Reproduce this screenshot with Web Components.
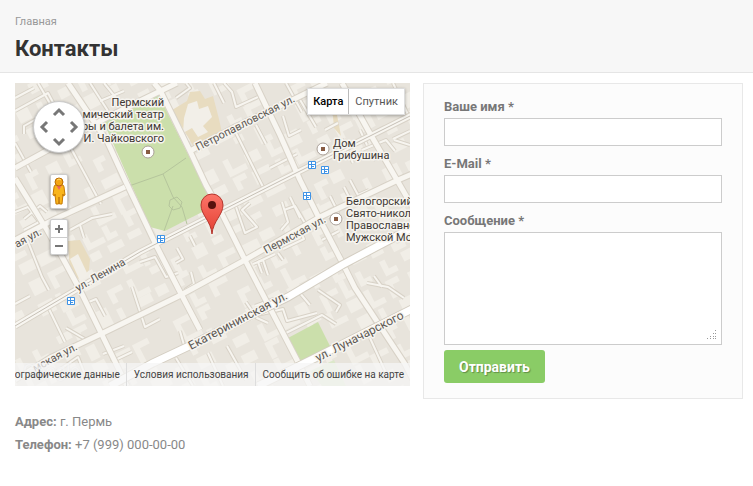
<!DOCTYPE html>
<html lang="ru">
<head>
<meta charset="utf-8">
<meta name="viewport" content="width=device-width, initial-scale=1">
<title>Контакты</title>
<style>
body { margin: 0; background: #fff; color: #888; font-family: Roboto, "Liberation Sans", sans-serif; font-size: 13px; }
</style>
</head>
<body>
<contacts-page></contacts-page>
<script>
class BaseElement extends HTMLElement {
  constructor() {
    super();
    this.attachShadow({ mode: 'open' }).innerHTML = '<style>*{box-sizing:border-box}</style>' + this.render();
  }
}

customElements.define('page-header', class extends BaseElement {
  render() {
    return `<style>
      :host { display: block; padding: 15px 15px 8px; background: #f7f7f7; border-bottom: 1px solid #e5e5e5; }
      nav { font-size: 11px; line-height: 14px; }
      a { color: #999; text-decoration: none; }
      h1 { margin: 5px 0 0; color: #333; font-size: 22px; line-height: 30px; font-weight: 700; }
    </style>
    <nav><a href="#"><slot name="crumb"></slot></a></nav>
    <h1><slot></slot></h1>`;
  }
});

// Buildings are laid on a grid turned to follow the streets.
function buildings() {
  let seed = 23;
  const rnd = () => (seed = (seed * 16807) % 2147483647) / 2147483647;
  let out = '';
  for (let u = -260; u < 260; u += 23) {
    for (let v = -240; v < 240; v += 20) {
      const r = rnd(), w = 10 + Math.floor(rnd() * 10), h = 7 + Math.floor(rnd() * 9);
      const x = u + Math.floor(rnd() * 6), y = v + Math.floor(rnd() * 5);
      if (r < 0.2) continue;
      if (r < 0.5) out += `<path d="M${x} ${y}h${w}v${h}h-${w}z"/>`;
      else if (r < 0.75) out += `<path d="M${x} ${y}h${w}v6h-${w - 6}v${h}h-6z"/>`;
      else out += `<path d="M${x} ${y}h6v${h}h${w - 4}v6h-${w + 2}z"/>`;
    }
  }
  return out;
}

customElements.define('city-map', class extends BaseElement {
  render() {
    const lanes = [
      'M15 111L48 93L56 108L24 126V134', 'M15 98L34 88', 'M38 83L55 112',
      'M90 83L108 111M104 83L117 99M100 101L124 91', 'M176 98L190 88L186 83M224 83L232 92L236 107L258 97',
      'M214 83L224 103', 'M66 139L101 204', 'M15 143L31 172', 'M15 212L28 207L44 228',
      'M25 234L42 277L49 290', 'M24 230L41 221M24 219L40 206L47 212', 'M70 230L92 218L112 214M80 225L84 238',
      'M140 262L155 257L166 277L178 273', 'M177 248L183 259L176 263M190 236L195 246',
      'M185 290L194 284L191 272', 'M236 207L245 233L257 227L242 210L250 203', 'M253 264L263 260L268 275',
      'M262 273L258 262L275 254', 'M284 210L295 206L306 225M284 236L299 229L304 239L283 249',
      'M283 260L278 253M322 240L339 231', 'M290 197L300 218M282 202L288 222L281 230',
      'M350 180L358 195L369 190M330 196L338 212L328 217', 'M344 187L351 201',
      'M15 304L30 296M49 309L65 342M84 304L96 299L105 316M66 328L90 342',
      'M132 287L145 327L160 319M180 331L184 345', 'M56 372L78 357L84 372', 'M103 354L124 346M111 362L132 352',
      'M217 333L244 318L283 309L287 321L317 313', 'M282 335L322 315L336 324',
      'M246 302L257 318L268 323M255 306L274 299', 'M299 292L310 305M318 290L340 305L336 312',
      'M208 353L223 386M227 346L246 380M176 358L193 386', 'M367 283L388 287L404 298',
      'M374 276L382 287M370 338L386 373', 'M362 150L386 140L395 151M373 160L388 153M393 139L410 131',
      'M342 139L353 163M360 130L367 145M283 116L289 136L301 130', 'M299 98L316 127M286 83L302 112',
      'M325 130L338 123', 'M398 181L405 175M394 140L410 145', 'M235 131L263 187M256 125L266 144',
      'M393 83L410 119', 'M270 168L297 154'
    ].map(d => `<path d="${d}"/>`).join('');
    const roads = [
      'M15 178L47 230L60 253L80 290L127 386', 'M15 168L70 138L104 119L140 101L177 83',
      'M68 83L107 141L125 180L157 247L178 288L200 330', 'M154 83L160 90L190 151L206 185L220 210L245 260L298 362L310 386',
      'M15 240L53 220L125 187', 'M190 151L233 128L280 106L327 83', 'M255 83L280 135L300 180L318 216L342 262L355 288L405 364L416 386',
      'M342 83L368 130L397 180L412 206',
      'M15 380L50 358L103 333L177 297L245 260L320 217L398 180L412 174', 'M15 326L140 252L280 181L412 115'
    ].map(d => `<path d="${d}"/>`).join('');
    const avenues = '<path d="M110 386L153 363L187 347L288 297L342 265L412 228"/><path d="M258 386L315 358L412 309"/>';
    const poi = (x, y) => `<circle cx="${x}" cy="${y}" r="6" fill="#fff" stroke="#aaa098"/><path d="M${x - 2} ${y - 2}h4v4h-4z" fill="#875b43"/>`;
    const stop = (x, y) => `<g transform="translate(${x - 4} ${y - 4})"><rect width="8" height="8" rx="1" fill="#3f93e6"/><path d="M1 1h6v6h-6z" fill="#fff"/><path d="M3 1h1v6h-1zM1 3h6v1h-6zM4 5h2v1h-2z" fill="#3f93e6"/></g>`;
    const street = (x, y, angle, size, text) => `<text class="street" font-size="${size}" transform="translate(${x} ${y}) rotate(${angle})">${text}</text>`;
    return `<style>
      :host { display: block; position: relative; height: 303px; overflow: hidden; background: #e9e5dd; }
      svg { display: block; }
      .canvas { width: 100%; height: 100%; }
      text { font-family: Roboto, "Liberation Sans", sans-serif; fill: #3e3834; stroke: #f6f4ef; stroke-width: 3px; stroke-linejoin: round; paint-order: stroke; }
      .street { fill: #5c5752; }
      .place { font-size: 11px; }
      button { display: flex; align-items: center; justify-content: center; margin: 0; padding: 0; border: 0; background: none; font: inherit; }
      .tools { position: absolute; left: 18px; top: 18px; display: flex; flex-direction: column; align-items: center; }
      .pan { display: grid; grid-template: repeat(3, 1fr) / repeat(3, 1fr); width: 52px; height: 52px; padding: 3px; border-radius: 50%; background: #fff; border: 1px solid #ccc; box-shadow: 0 1px 3px rgba(0,0,0,.4); }
      .pan button:nth-child(1) { grid-area: 1 / 2; }
      .pan button:nth-child(2) { grid-area: 2 / 1; }
      .pan button:nth-child(3) { grid-area: 2 / 3; }
      .pan button:nth-child(4) { grid-area: 3 / 2; }
      .pan path { fill: none; stroke: #777; stroke-width: 3; }
      .box { width: 18px; border-radius: 2px; background: #fff; border: 1px solid #ccc; box-shadow: 0 1px 3px rgba(0,0,0,.4); }
      .pegman { height: 35px; margin-top: 21px; }
      .zoom { margin-top: 10px; }
      .zoom button { width: 16px; height: 17px; }
      .zoom button + button { border-top: 1px solid #ccc; }
      .types { position: absolute; right: 5px; top: 5px; display: flex; background: #fff; box-shadow: 0 1px 3px rgba(0,0,0,.3); border: 1px solid #ddd; }
      .types button { height: 25px; padding: 0 6px; color: #565656; font-size: 11px; }
      .types button:first-child { padding: 0 5px; color: #000; font-weight: 500; }
      .types button + button { border-left: 1px solid #bbb; }
      footer { position: absolute; right: 0; bottom: 0; display: flex; justify-content: flex-end; width: 100%; background: rgba(245,245,245,.75); font-size: 10px; line-height: 23px; white-space: nowrap; }
      footer a { padding: 0 6px; color: #444; text-decoration: none; }
      footer a + a { padding-left: 7px; border-left: 1px solid #ddd; }
    </style>
    <svg class="canvas" viewBox="15 83 395 303" preserveAspectRatio="xMidYMid slice" role="img" aria-label="Карта">
      <path d="M15 83h395v303H15z" fill="#e8e4dc"/>
      <g fill="#f1eee7" transform="translate(212 234) rotate(-27)">${buildings()}</g>
      <g fill="#e8dcc0"><path d="M172 110L187 101L190 92L200 91L205 99L213 96L219 119L222 133L195 149Z"/><path d="M68 241L80 240L90 259L89 270L80 280L70 272Z"/><path d="M332 105L337 115L341 136L334 128Z"/></g>
      <g fill="#f2efe8"><path d="M188 104l9-3 2 8 9-3 4 11-9 9 5 6-10 5-6-9-9 5 1-15z"/><path d="M70 259l8-5 10 21-8 6z"/></g>
      <path d="M101 116L158 94L214 206L165 231L150 227Z" fill="#cbdfab"/>
      <path d="M288 338L318 322L332 350L300 365Z" fill="#cbdfab"/>
      <path d="M310 371L334 360L346 386L322 386Z" fill="#dce8ca"/>
      <g fill="none" stroke="#b5c59c"><path d="M163 174L186 158M163 174L173 197L182 207L187 224M129 186L163 174M173 206L164 231"/><path d="M170 200l7-3 5 5-2 6-7 2-4-4z"/></g>
      <g fill="none" stroke-linejoin="round"><g stroke="#d8d2c7" stroke-width="4">${lanes}</g><g stroke="#f7f5f0" stroke-width="2">${lanes}</g></g>
      <g fill="none" stroke-linejoin="round"><g stroke="#d8d2c7" stroke-width="7">${roads}</g><g stroke="#f8f6f1" stroke-width="5">${roads}</g></g>
      <path d="M15 326L140 252L280 181L412 115" fill="none" stroke="#c5bfb5"/>
      <g fill="none"><g stroke="#d4cec2" stroke-width="9">${avenues}</g><g stroke="#fff" stroke-width="7">${avenues}</g></g>
      ${street(198, 151, -27, 11, 'Петропавловская ул.')}
      ${street(78, 292, -30, 11, 'ул. Ленина')}
      ${street(266, 254, -28, 11, 'Пермская ул.')}
      ${street(17, 248, -29, 11, 'ая ул.')}
      ${street(35, 372, -28, 11, 'мская ул.')}
      ${street(191, 350, -28, 12, 'Екатерининская ул.')}
      ${street(318, 362, -27, 12, 'ул. Луначарского')}
      <g class="place">
        <g text-anchor="end"><text x="164" y="106">Пермский</text><text x="164" y="118">мический театр</text><text x="164" y="130">ры и балета им.</text><text x="164" y="142">И. Чайковского</text></g>
        <text x="333" y="147">Дом</text><text x="333" y="159">Грибушина</text>
        <text x="346" y="205">Белогорский</text><text x="346" y="217">Свято-никол</text><text x="346" y="229">Православно</text><text x="346" y="241">Мужской Мо</text>
      </g>
      ${poi(148, 152)}${poi(323, 149)}${poi(336, 219)}
      ${stop(312, 165)}${stop(325, 170)}${stop(307, 196)}${stop(161, 239)}${stop(71, 301)}
      <defs><linearGradient id="pin" x2="0" y2="1"><stop stop-color="#fc7569"/><stop offset="1" stop-color="#e33f32"/></linearGradient></defs>
      <path d="M212 234C211 221 201 215 201 205A11 11 0 0 1 223 205C223 215 213 221 212 234Z" fill="url(#pin)" stroke="#b5362d"/>
      <circle cx="212" cy="205" r="4" fill="#59120d"/>
      <text x="23" y="377" font-size="18" style="fill:#fff;fill-opacity:.5;stroke:#aaa;stroke-opacity:.3;stroke-width:1px">Google</text>
    </svg>
    <div class="tools">
      <div class="pan">
        <button aria-label="Вверх"><svg width="14" height="10"><path d="M2 8l5-5 5 5"/></svg></button>
        <button aria-label="Влево"><svg width="10" height="14"><path d="M8 2L3 7l5 5"/></svg></button>
        <button aria-label="Вправо"><svg width="10" height="14"><path d="M2 2l5 5-5 5"/></svg></button>
        <button aria-label="Вниз"><svg width="14" height="10"><path d="M2 2l5 5 5-5"/></svg></button>
      </div>
      <button class="box pegman" aria-label="Просмотр улиц"><svg width="14" height="29" viewBox="0 0 14 29"><path d="M2 10Q2 8 4 8H10Q12 8 12 10L13 18 11 19V17L10 27H7.500L7 20 6.500 27H4L3 17V19L1 18Z" fill="#f9b51c" stroke="#c67a05"/><path d="M4 8h6l-3 5z" fill="#ef6666"/><circle cx="7" cy="5" r="4" fill="#f4a514" stroke="#b96c06"/><path d="M5 3q2-2 4 0" fill="none" stroke="#ffe07a"/></svg></button>
      <div class="box zoom">
        <button aria-label="Увеличить"><svg width="8" height="8"><path d="M0 4h8M4 0v8" stroke="#777" stroke-width="2"/></svg></button>
        <button aria-label="Уменьшить"><svg width="8" height="8"><path d="M0 4h8" stroke="#777" stroke-width="2"/></svg></button>
      </div>
    </div>
    <div class="types"><button>Карта</button><button>Спутник</button></div>
    <footer><a href="#">ографические данные</a><a href="#">Условия использования</a><a href="#">Сообщить об ошибке на карте</a></footer>`;
  }
});

customElements.define('contact-form', class extends BaseElement {
  render() {
    return `<style>
      :host { display: block; padding: 12px 20px 15px; border: 1px solid #e8e8e8; background: #fcfcfc; }
      form { margin: 0; }
      label { display: block; color: #777; font-weight: 700; line-height: 22px; }
      input, textarea { display: block; width: 100%; margin: 0; padding: 4px 6px; border: 1px solid #ccc; border-radius: 0; background: #fff; font: inherit; outline: 0; }
      input { height: 28px; margin-bottom: 7px; }
      textarea { height: 113px; resize: none; }
      .area { position: relative; margin-bottom: 5px; }
      .area svg { position: absolute; right: 5px; bottom: 5px; }
      button { display: block; height: 33px; padding: 0 15px; border: 0; border-radius: 3px; background: #8acc66; color: #fff; font: inherit; font-size: 14px; font-weight: 700; text-shadow: 1px 1px 1px rgba(0,0,0,.3); }
    </style>
    <form>
      <label for="name">Ваше имя *</label><input id="name" type="text">
      <label for="mail">E-Mail *</label><input id="mail" type="email">
      <label for="message">Сообщение *</label>
      <div class="area"><textarea id="message"></textarea><svg width="10" height="10" fill="#999"><path d="M8 0h1v1h-1zM6 3h1v1h-1zM8 3h1v1h-1zM3 6h1v1h-1zM6 6h1v1h-1zM8 6h1v1h-1zM0 8h1v1h-1zM3 8h1v1h-1zM6 8h1v1h-1zM8 8h1v1h-1z"/></svg></div>
      <button type="button">Отправить</button>
    </form>`;
  }
});

customElements.define('contact-line', class extends BaseElement {
  render() {
    return `<style>:host { display: block; line-height: 23px; }</style><b><slot name="label"></slot></b> <slot></slot>`;
  }
});

customElements.define('contacts-page', class extends BaseElement {
  render() {
    return `<style>
      :host { display: block; }
      main { display: grid; grid-template-columns: minmax(0, 1fr) 320px; gap: 13px; align-items: start; padding: 10px 10px 30px 15px; }
      section { display: grid; }
      address { margin-top: 24px; font-style: normal; }
      @media (max-width: 600px) { main { grid-template-columns: minmax(0, 1fr); } }
    </style>
    <page-header><span slot="crumb">Главная</span>Контакты</page-header>
    <main>
      <section>
        <city-map></city-map>
        <address>
          <contact-line><span slot="label">Адрес:</span>г. Пермь</contact-line>
          <contact-line><span slot="label">Телефон:</span>+7 (999) 000-00-00</contact-line>
        </address>
      </section>
      <contact-form></contact-form>
    </main>`;
  }
});
</script>
</body>
</html>
